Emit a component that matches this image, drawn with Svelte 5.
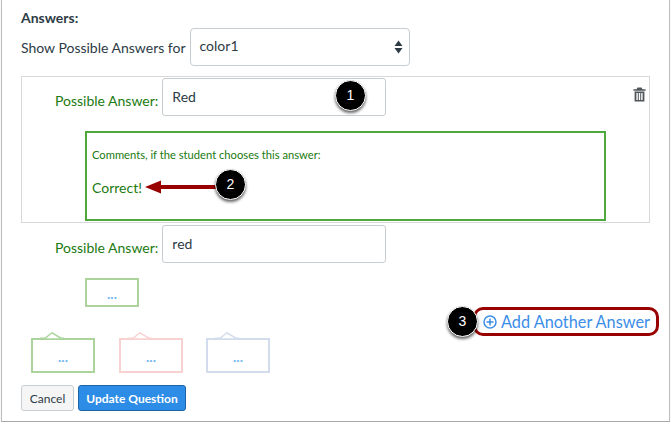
<script lang="ts">
	const tabs = ['green', 'red', 'blue'];
</script>

<div class="shot">
	<h4 class="title">Answers:</h4>
	<div class="show-row">
		<span class="show-label">Show Possible Answers for</span>
		<div class="select">
			<span>color1</span>
			<svg class="updown" width="9" height="14" viewBox="0 0 9 14">
				<path d="M4.5 0.5 8.5 6H0.5Z" fill="#2d3b45" />
				<path d="M0.5 8H8.5L4.5 13.5Z" fill="#2d3b45" />
			</svg>
		</div>
	</div>

	<div class="answer-box">
		<div class="answer-row">
			<span class="answer-label">Possible Answer:</span>
			<div class="input">Red</div>
		</div>
		<svg class="trash" width="13" height="15" viewBox="0 0 13 15">
			<path d="M4.5 0.5H8.5L9.5 2.2H12.6V3.8H0.4V2.2H3.5Z" fill="#50555a" />
			<path fill-rule="evenodd" d="M1.6 4.6H11.4V14.5H1.6ZM3.4 6V13H4.8V6ZM5.8 6V13H7.2V6ZM8.2 6V13H9.6V6Z" fill="#50555a" />
		</svg>
		<div class="comment">
			<p class="comment-hint">Comments, if the student chooses this answer:</p>
			<p class="comment-text">Correct!</p>
		</div>
	</div>

	<div class="answer-row second">
		<span class="answer-label">Possible Answer:</span>
		<div class="input">red</div>
	</div>

	<div class="dots-box">...</div>

	<div class="tabs">
		{#each tabs as tab}
			<div class="tab {tab}">
				<svg class="notch" width="24" height="7" viewBox="0 0 24 7">
					<path d="M0 6.2H5L12 .8 21 6.2H24" fill="#fff" stroke="currentColor" stroke-width="1.4" />
				</svg>
				<span>...</span>
			</div>
		{/each}
	</div>

	<div class="actions">
		<button class="btn">Cancel</button>
		<button class="btn primary">Update Question</button>
	</div>

	<div class="add-answer">
		<svg width="14" height="14" viewBox="0 0 14 14" fill="none" stroke="#3b8ee8" stroke-width="1.5">
			<circle cx="7" cy="7" r="6" />
			<path d="M7 3.5V10.5M3.5 7H10.5" />
		</svg>
		<span>Add Another Answer</span>
	</div>

	<svg class="arrow" width="72" height="16" viewBox="0 0 72 16">
		<path d="M0 8 16 1.5V6H72V10H16V14.5Z" fill="#990000" />
	</svg>

	<div class="badge one">1</div>
	<div class="badge two">2</div>
	<div class="badge three">3</div>
</div>

<style>
	:global(body) {
		margin: 0;
		background: #fff;
	}

	.shot {
		position: relative;
		box-sizing: border-box;
		width: 669px;
		height: 422px;
		margin-left: 1px;
		padding: 9px 0 0 19px;
		background: #fff;
		border-left: 1px solid #bdbdbd;
		border-right: 1px solid #bdbdbd;
		border-bottom: 1px solid #a8a8a8;
		box-shadow: 0 1px 1px rgba(0, 0, 0, 0.15);
		font-family: Lato, sans-serif;
		color: #2d3b45;
		overflow: hidden;
	}

	.title {
		margin: 0;
		font-size: 14px;
		line-height: 18px;
		font-weight: 700;
	}

	.show-row {
		display: flex;
		align-items: center;
		gap: 4px;
		margin-top: 1px;
		font-size: 14px;
	}

	.select {
		box-sizing: border-box;
		display: flex;
		align-items: center;
		justify-content: space-between;
		width: 220px;
		height: 38px;
		padding: 0 3px 4px 9px;
		border: 1px solid #c7cdd1;
		border-radius: 4px;
	}

	.updown {
		margin-top: 4px;
		margin-right: 3px;
	}

	.answer-box {
		position: relative;
		box-sizing: border-box;
		width: 629px;
		height: 147px;
		margin-top: 10px;
		padding-top: 1px;
		border: 1px solid #d8d8d8;
	}

	.answer-row {
		display: flex;
		align-items: flex-start;
		font-size: 14px;
	}

	.answer-box .answer-row {
		padding-left: 33px;
	}

	.answer-row.second {
		padding-left: 34px;
		margin-top: 2px;
	}

	.answer-label {
		margin-top: 14px;
		margin-right: 4px;
		color: #217a10;
	}

	.input {
		box-sizing: border-box;
		width: 224px;
		height: 38px;
		padding: 9px 9px;
		line-height: 17px;
		border: 1px solid #c7cdd1;
		border-radius: 3px;
	}

	.trash {
		position: absolute;
		top: 10px;
		right: 3px;
	}

	.comment {
		box-sizing: border-box;
		width: 521px;
		height: 90px;
		margin: 15px 0 0 63px;
		padding: 14px 5px;
		border: 2px solid #4fa83d;
		color: #217a10;
	}

	.comment-hint {
		margin: 0;
		font-size: 11.2px;
		line-height: 15px;
	}

	.comment-text {
		margin: 17px 0 0;
		font-size: 14px;
		line-height: 18px;
	}

	.dots-box {
		box-sizing: border-box;
		width: 54px;
		height: 29px;
		margin: 15px 0 0 64px;
		border: 2px solid #aad49c;
		color: #73b8f5;
		font-size: 14px;
		line-height: 28px;
		font-weight: 700;
		text-align: center;
	}

	.tabs {
		display: flex;
		gap: 24px;
		margin: 31px 0 0 10px;
	}

	.tab {
		position: relative;
		box-sizing: border-box;
		width: 64px;
		height: 35px;
		border: 2px solid;
		font-size: 14px;
		line-height: 34px;
		font-weight: 700;
		text-align: center;
	}

	.tab span {
		color: #73b8f5;
	}

	.tab.green {
		border-color: #aad49c;
		color: #aad49c;
	}

	.tab.red {
		border-color: #f7d2d0;
		color: #f7d2d0;
	}

	.tab.blue {
		border-color: #d3dcec;
		color: #d3dcec;
		margin-left: -1px;
	}

	.notch {
		position: absolute;
		top: -8px;
		left: 7px;
	}

	.actions {
		display: flex;
		gap: 4px;
		margin-top: 12px;
	}

	.btn {
		box-sizing: border-box;
		height: 26px;
		padding: 0;
		width: 53px;
		border: 1px solid #c7cdd1;
		border-radius: 3px;
		background: #f5f5f5;
		color: #2d3b45;
		font: 12px Lato, sans-serif;
		white-space: nowrap;
	}

	.btn.primary {
		width: 108px;
		background: #2d8ce6;
		border-color: #1c64a8;
		color: #fff;
		font-weight: 700;
	}

	.add-answer {
		position: absolute;
		left: 471px;
		top: 307px;
		box-sizing: border-box;
		width: 186px;
		height: 29px;
		display: flex;
		align-items: center;
		gap: 4px;
		padding-left: 7px;
		border: 3px solid #990000;
		border-radius: 10px;
		color: #3b8ee8;
		font-size: 16.3px;
		white-space: nowrap;
	}

	.arrow {
		position: absolute;
		left: 143px;
		top: 179px;
	}

	.badge {
		position: absolute;
		box-sizing: border-box;
		width: 31px;
		height: 31px;
		border: 1px solid #fff;
		border-radius: 50%;
		background: #000;
		color: #fff;
		font-family: 'Liberation Sans', sans-serif;
		font-size: 14px;
		line-height: 29px;
		text-align: center;
		box-shadow: 0 2px 3px rgba(0, 0, 0, 0.6);
	}

	.badge.one {
		left: 333px;
		top: 80px;
	}

	.badge.two {
		left: 213px;
		top: 169px;
	}

	.badge.three {
		left: 445px;
		top: 306px;
	}
</style>
